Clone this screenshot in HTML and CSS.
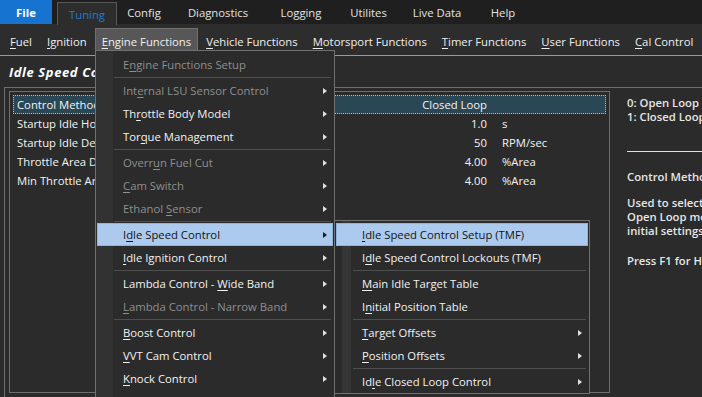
FILE: index.html
```html
<!DOCTYPE html>
<html>
<head>
<meta charset="utf-8">
<link rel="stylesheet" href="styles.css">
</head>
<body>
<div class="app">
  <div class="tabs">
    <div class="tab file">File</div>
    <div class="tab active">Tuning</div>
    <div class="tab">Config</div>
    <div class="tab">Diagnostics</div>
    <div class="tab">Logging</div>
    <div class="tab">Utilites</div>
    <div class="tab">Live Data</div>
    <div class="tab">Help</div>
  </div>
  <div class="menubar">
    <div class="mb-item"><span><u>F</u>uel</span></div>
    <div class="mb-item"><span><u>I</u>gnition</span></div>
    <div class="mb-item open"><span><u>E</u>ngine Functions</span></div>
    <div class="mb-item"><span><u>V</u>ehicle Functions</span></div>
    <div class="mb-item"><span><u>M</u>otorsport Functions</span></div>
    <div class="mb-item"><span><u>T</u>imer Functions</span></div>
    <div class="mb-item"><span><u>U</u>ser Functions</span></div>
    <div class="mb-item"><span><u>C</u>al Control</span></div>
  </div>
  <div class="title">Idle Speed Control</div>
  <div class="frame">
    <div class="list">
      <div class="row sel"><span class="lbl">Control Method</span><span class="val">Closed Loop</span><span class="unit"></span></div>
      <div class="row"><span class="lbl">Startup Idle Hold Time</span><span class="val">1.0</span><span class="unit">s</span></div>
      <div class="row"><span class="lbl">Startup Idle Decay Rate</span><span class="val">50</span><span class="unit">RPM/sec</span></div>
      <div class="row"><span class="lbl">Throttle Area Deadband</span><span class="val">4.00</span><span class="unit">%Area</span></div>
      <div class="row"><span class="lbl">Min Throttle Area</span><span class="val">4.00</span><span class="unit">%Area</span></div>
    </div>
    <div class="help">
      <div class="hl">0: Open Loop</div>
      <div class="hl">1: Closed Loop</div>
      <div class="hr"></div>
      <div class="hl">Control Method</div>
      <div class="hl gap">Used to select between</div>
      <div class="hl">Open Loop mode and</div>
      <div class="hl">initial settings</div>
      <div class="hl gap2">Press F1 for Help</div>
    </div>
  </div>

  <div class="menu main">
    <div class="mi dis"><span>E<u>n</u>gine Functions Setup</span></div>
    <div class="sep"></div>
    <div class="mi dis sub-arrow"><span>Int<u>e</u>rnal LSU Sensor Control</span></div>
    <div class="mi sub-arrow"><span>Th<u>r</u>ottle Body Model</span></div>
    <div class="mi sub-arrow"><span>Tor<u>q</u>ue Management</span></div>
    <div class="sep"></div>
    <div class="mi dis sub-arrow"><span>Overr<u>u</u>n Fuel Cut</span></div>
    <div class="mi dis sub-arrow"><span><u>C</u>am Switch</span></div>
    <div class="mi dis sub-arrow"><span>Ethanol <u>S</u>ensor</span></div>
    <div class="sep"></div>
    <div class="mi hi sub-arrow"><span>I<u>d</u>le Speed Control</span></div>
    <div class="mi sub-arrow"><span><u>I</u>dle Ignition Control</span></div>
    <div class="sep"></div>
    <div class="mi sub-arrow"><span>Lambda Control - <u>W</u>ide Band</span></div>
    <div class="mi dis sub-arrow"><span><u>L</u>ambda Control - Narrow Band</span></div>
    <div class="sep"></div>
    <div class="mi sub-arrow"><span><u>B</u>oost Control</span></div>
    <div class="mi sub-arrow"><span><u>V</u>VT Cam Control</span></div>
    <div class="mi sub-arrow"><span><u>K</u>nock Control</span></div>
    <div class="mi sub-arrow"><span>Fuel Pump Control</span></div>
  </div>

  <div class="menu submenu">
    <div class="mi hi"><span><u>I</u>dle Speed Control Setup (TMF)</span></div>
    <div class="mi"><span>I<u>d</u>le Speed Control Lockouts (TMF)</span></div>
    <div class="sep"></div>
    <div class="mi"><span><u>M</u>ain Idle Target Table</span></div>
    <div class="mi"><span>I<u>n</u>itial Position Table</span></div>
    <div class="sep"></div>
    <div class="mi sub-arrow"><span><u>T</u>arget Offsets</span></div>
    <div class="mi sub-arrow"><span><u>P</u>osition Offsets</span></div>
    <div class="sep"></div>
    <div class="mi sub-arrow"><span>Id<u>l</u>e Closed Loop Control</span></div>
  </div>
</div>
</body>
</html>
```
FILE: styles.css
```css
* { box-sizing: border-box; }
html, body { margin: 0; padding: 0; }
body {
  background: #2b2b2b;
  font-family: "Open Sans", "Noto Sans", sans-serif;
  font-size: 11.3px;
  color: #f0f0f0;
}
.app {
  position: relative;
  width: 702px;
  height: 397px;
  overflow: hidden;
  background: #2b2b2b;
}
u { text-underline-offset: 2px; text-decoration-thickness: 1px; }

/* top tabs */
.tabs {
  display: flex;
  height: 25px;
  background: #1f1f1f;
  border-bottom: 1px solid #a3a3a3;
}
.tab {
  height: 24px;
  display: flex;
  align-items: center;
  justify-content: center;
  color: #e2e2e2;
  font-size: 11.3px;
}
.tab.file {
  width: 52px;
  background: #1673cf;
  color: #fff;
  font-weight: 700;
  margin-right: 5px;
}
.tab.active {
  width: 60px;
  margin-top: 2px;
  height: 23px;
  background: #2d2d2d;
  border: 1px solid #585858;
  border-bottom: none;
  color: #2479cf;
  position: relative;
  z-index: 1;
  padding-top: 1px;
}
.tab:nth-child(3) { width: 54px; }
.tab:nth-child(4) { width: 94px; }
.tab:nth-child(5) { width: 72px; }
.tab:nth-child(6) { width: 63px; }
.tab:nth-child(7) { width: 74px; }
.tab:nth-child(8) { width: 58px; }

/* menu bar */
.menubar {
  display: flex;
  height: 32px;
  margin-top: -1px;
  padding: 4px 0 0 3px;
  background: #2d2d2d;
  border-bottom: 1px solid #9a9a9a;
}
.mb-item {
  height: 26px;
  padding: 0 7px;
  display: flex;
  align-items: center;
  color: #efefef;
  white-space: nowrap;
  margin-right: 1px;
}
.mb-item.open {
  background: #575757;
  border: 1px solid #707070;
  border-bottom: none;
  padding: 0 6px;
}

/* title */
.title {
  height: 31px;
  padding-left: 9px;
  display: flex;
  align-items: center;
  font-weight: 700;
  font-style: italic;
  font-size: 13px;
  letter-spacing: 0.6px;
  color: #fff;
}

/* frame */
.frame {
  display: flex;
  margin-left: 4px;
  height: 320px;
  border-top: 1px solid #6e6e6e;
  border-left: 1px solid #6e6e6e;
}
.list {
  width: 601px;
  height: 302px;
  margin: 3px 0 0 4px;
  border: 1px solid #6e6e6e;
  padding: 3px 3px;
}
.row {
  display: grid;
  grid-template-columns: 396px 74px auto;
  height: 19px;
  align-items: center;
  padding-left: 4px;
  color: #f4f4f4;
  white-space: nowrap;
}
.row .lbl { overflow: hidden; }
.row .val { text-align: right; }
.row .unit { padding-left: 15px; }
.row.sel {
  background: #2a4756;
  outline: 1px dotted #9fc3cf;
  outline-offset: -1px;
}
.help {
  flex: 1;
  padding: 8px 0 0 17px;
  font-weight: 600;
  color: #e6e6e6;
  white-space: nowrap;
  overflow: hidden;
}
.hl { height: 14px; line-height: 14px; }
.hl.gap { margin-top: 12px; }
.hl.gap2 { margin-top: 16px; }
.hr {
  height: 1px;
  background: #e0e0e0;
  margin: 27px 0 18px 0;
}

/* menus */
.menu {
  position: absolute;
  background: #2b2b2b;
  border: 1px solid #707070;
  padding: 2px 1px;
}
.menu.main {
  left: 95px;
  top: 50px;
  width: 240px;
  height: 400px;
  background: linear-gradient(to right, #323232 0, #323232 17px, #2b2b2b 17px);
  background-clip: padding-box;
}
.menu.submenu {
  left: 334px;
  top: 220px;
  width: 256px;
  height: 174px;
  background: linear-gradient(to right, #2b2b2b 0, #2b2b2b 7px, #363636 7px, #363636 16px, #2b2b2b 16px);
}
.mi {
  position: relative;
  height: 23px;
  display: flex;
  align-items: center;
  padding-left: 25px;
  color: #f2f2f2;
  white-space: nowrap;
  border: 1px solid transparent;
}
.mi.dis { color: #8f8f8f; }
.mi.hi {
  background: #abcaee;
  border-color: #8fb3df;
  color: #141414;
}
.mi.sub-arrow::after {
  content: "";
  position: absolute;
  right: 5px;
  top: 8px;
  border-left: 4px solid #e0e0e0;
  border-top: 3.5px solid transparent;
  border-bottom: 3.5px solid transparent;
}
.mi.hi.sub-arrow::after { border-left-color: #1a1a1a; }
.sep {
  height: 3px;
  margin-left: 17px;
  margin-right: 2px;
  border-top: 1px solid #4f4f4f;
  position: relative;
  top: 1px;
}
```
